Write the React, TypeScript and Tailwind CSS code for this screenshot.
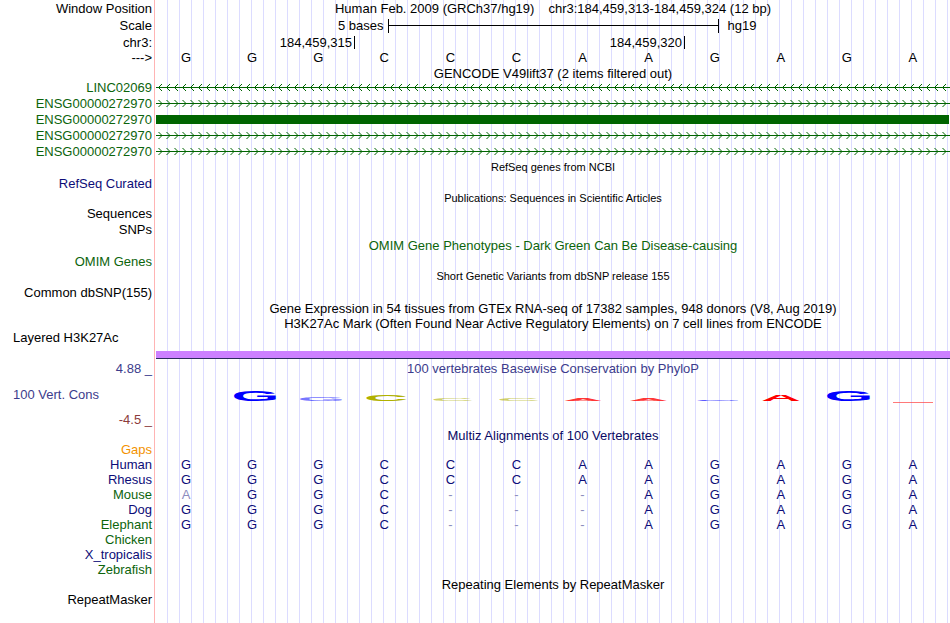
import type { ReactNode } from "react";

const GRID =
  "bg-[image:repeating-linear-gradient(to_right,transparent_0px,transparent_11px,#dcdcff_11px,#dcdcff_12px)]";

const NAVY = "text-[#0c0c78]";
const GREEN = "text-[#0c640c]";

interface RowProps {
  h: string;
  label?: ReactNode;
  labelClass?: string;
  dataClass?: string;
  plain?: boolean;
  children?: ReactNode;
}

const Row = ({
  h,
  label,
  labelClass = "justify-end pr-[2px] text-black",
  dataClass = "flex items-center justify-center",
  plain = false,
  children,
}: RowProps) => (
  <div className={`flex shrink-0 ${h}`}>
    <div
      className={`flex w-[154px] shrink-0 items-center whitespace-nowrap leading-[13px] ${labelClass}`}
    >
      {label}
    </div>
    <div className="w-px shrink-0 bg-[#ffb4b4]" />
    <div className="w-px shrink-0" />
    <div
      className={`min-w-0 flex-1 whitespace-nowrap leading-[13px] ${plain ? "" : GRID} ${dataClass}`}
    >
      {children}
    </div>
  </div>
);

// gene strand with chevrons every 8px
const Strand = ({ id, rev }: { id: string; rev?: boolean }) => (
  <svg width="794" height="15" className="block">
    <defs>
      <pattern
        id={id}
        x={1}
        y={0}
        width={8}
        height={15}
        patternUnits="userSpaceOnUse"
      >
        <polyline
          points={rev ? "5,4 1.5,7.5 5,11" : "1.5,4 5,7.5 1.5,11"}
          fill="none"
          stroke="#006400"
          strokeWidth={1}
        />
      </pattern>
    </defs>
    <line x1={0} x2={794} y1={7.5} y2={7.5} stroke="#006400" />
    <rect x={0} y={0} width={794} height={15} fill={`url(#${id})`} />
  </svg>
);

const REF = "GGGCCCAAGAGA".split("");
const GAPPED = ["G", "G", "G", "C", "-", "-", "-", "A", "G", "A", "G", "A"];

const BaseRow = ({
  bases,
  tone = "text-[#0c0c78]",
  lightFirst = false,
}: {
  bases: string[];
  tone?: string;
  lightFirst?: boolean;
}) => (
  <div className="-ml-[3px] grid h-full w-[793px] grid-cols-12 items-center text-center leading-[13px]">
    {bases.map((b, i) => (
      <span
        key={i}
        className={
          b === "-" || (lightFirst && i === 0) ? "text-[#8c8cbe]" : tone
        }
      >
        {b}
      </span>
    ))}
  </div>
);

const LOGO = [
  { cx: 255.5, w: 48, h: 10, ch: "G", fill: "#0000ff", op: 1 },
  { cx: 321.5, w: 48, h: 4, ch: "G", fill: "#0000ff", op: 0.55 },
  { cx: 386, w: 44, h: 6.3, ch: "C", fill: "#b0b000", op: 1 },
  { cx: 452.5, w: 43, h: 2, ch: "C", fill: "#b0b000", op: 0.6 },
  { cx: 518.5, w: 43, h: 2, ch: "C", fill: "#b0b000", op: 0.6 },
  { cx: 583, w: 40, h: 2.2, ch: "A", fill: "#ff0000", op: 0.8 },
  { cx: 648.5, w: 40, h: 2.2, ch: "A", fill: "#ff0000", op: 0.8 },
  { cx: 718, w: 47, h: 1.3, ch: "G", fill: "#0000ff", op: 0.8 },
  { cx: 781, w: 40, h: 7, ch: "A", fill: "#ff0000", op: 1 },
  { cx: 849, w: 49, h: 11, ch: "G", fill: "#0000ff", op: 1 },
];

const SeqLogo = () => (
  <svg width="794" height="32" className="block">
    {LOGO.map((l, i) => (
      <text
        key={i}
        transform={`translate(${l.cx - 156} 23) scale(1 ${l.h / 10.2})`}
        textAnchor="middle"
        fontSize={14}
        fontWeight="bold"
        fontFamily="'Liberation Sans', Arial, sans-serif"
        textLength={l.w}
        lengthAdjust="spacingAndGlyphs"
        fill={l.fill}
        fillOpacity={l.op}
      >
        {l.ch}
      </text>
    ))}
    <rect x={737} y={24} width={40} height={1} fill="#ff4040" opacity={0.7} />
  </svg>
);

const SPECIES: { name: string; tone: string; bases?: string[]; light?: boolean }[] = [
  { name: "Human", tone: NAVY, bases: REF },
  { name: "Rhesus", tone: NAVY, bases: REF },
  { name: "Mouse", tone: GREEN, bases: ["A", ...GAPPED.slice(1)], light: true },
  { name: "Dog", tone: NAVY, bases: GAPPED },
  { name: "Elephant", tone: GREEN, bases: GAPPED },
  { name: "Chicken", tone: GREEN },
  { name: "X_tropicalis", tone: NAVY },
  { name: "Zebrafish", tone: GREEN },
];

const App = () => {
  return (
    <div className="flex h-[623px] w-[950px] flex-col overflow-hidden bg-white font-['Liberation_Sans',Arial,sans-serif] text-[13px] text-black">
      <Row h="h-[17px]" label="Window Position">
        <div className="flex gap-[14px]">
          <span>Human Feb. 2009 (GRCh37/hg19)</span>
          <span>chr3:184,459,313-184,459,324 (12 bp)</span>
        </div>
      </Row>
      <Row h="h-[17px]" label="Scale" dataClass="flex items-center pl-[182px]">
        <span>5 bases</span>
        <div className="ml-[4px] flex h-[14px] w-[331px] items-center border-x border-black">
          <div className="h-px w-full bg-black" />
        </div>
        <span className="ml-[9px]">hg19</span>
      </Row>
      <Row h="h-[16px]" label="chr3:" dataClass="flex items-center">
        <span className="w-[196px] text-right">184,459,315</span>
        <div className="ml-[2px] h-[13px] w-px bg-black" />
        <span className="w-[327px] text-right">184,459,320</span>
        <div className="ml-[2px] h-[13px] w-px bg-black" />
      </Row>
      <Row h="h-[15px]" label="--->" dataClass="">
        <BaseRow bases={REF} tone="text-black" />
      </Row>
      <Row h="h-[15px]" dataClass="flex items-end justify-center">
        GENCODE V49lift37 (2 items filtered out)
      </Row>

      <Row h="h-[15px]" label="LINC02069" labelClass={`justify-end pr-[2px] ${GREEN}`} dataClass="flex items-center">
        <Strand id="s-rev" rev />
      </Row>
      <Row h="h-[16px]" label="ENSG00000272970" labelClass={`justify-end pr-[2px] ${GREEN}`} dataClass="flex items-center">
        <Strand id="s-fwd1" />
      </Row>
      <Row h="h-[16px]" label="ENSG00000272970" labelClass={`justify-end pr-[2px] ${GREEN}`} dataClass="flex items-center">
        <div className="h-[9px] w-[793px] bg-[#006400]" />
      </Row>
      <Row h="h-[16px]" label="ENSG00000272970" labelClass={`justify-end pr-[2px] ${GREEN}`} dataClass="flex items-center">
        <Strand id="s-fwd2" />
      </Row>
      <Row h="h-[16px]" label="ENSG00000272970" labelClass={`justify-end pr-[2px] ${GREEN}`} dataClass="flex items-center">
        <Strand id="s-fwd3" />
      </Row>

      <Row h="h-[16px]">
        <span className="text-[11px]">RefSeq genes from NCBI</span>
      </Row>
      <Row h="h-[16px]" label="RefSeq Curated" labelClass={`justify-end pr-[2px] ${NAVY}`} />
      <Row h="h-[15px]">
        <span className="text-[11px]">
          Publications: Sequences in Scientific Articles
        </span>
      </Row>
      <Row h="h-[15px]" label="Sequences" />
      <Row h="h-[16px]" label="SNPs" />
      <Row h="h-[16px]" dataClass={`flex items-center justify-center ${GREEN}`}>
        OMIM Gene Phenotypes - Dark Green Can Be Disease-causing
      </Row>
      <Row h="h-[16px]" label="OMIM Genes" labelClass={`justify-end pr-[2px] ${GREEN}`} />
      <Row h="h-[15px]">
        <span className="text-[11px]">
          Short Genetic Variants from dbSNP release 155
        </span>
      </Row>
      <Row h="h-[16px]" label="Common dbSNP(155)" />
      <Row h="h-[16px]">
        Gene Expression in 54 tissues from GTEx RNA-seq of 17382 samples, 948
        donors (V8, Aug 2019)
      </Row>
      <Row h="h-[14px]">
        H3K27Ac Mark (Often Found Near Active Regulatory Elements) on 7 cell
        lines from ENCODE
      </Row>
      <Row h="h-[15px]" label="Layered H3K27Ac" labelClass="justify-start pl-[13px] text-black" />
      <Row h="h-[6px]" />
      <Row h="h-[7px]" plain dataClass="bg-[#cd80ff]" />
      <Row h="h-px" plain dataClass="bg-[#2c2c5c]" />

      <Row
        h="h-[19px]"
        label="4.88 _"
        labelClass="justify-end pr-[2px] text-[#3c3c8c]"
        dataClass="flex items-center justify-center text-[#3c3c8c]"
      >
        100 vertebrates Basewise Conservation by PhyloP
      </Row>
      <Row
        h="h-[32px]"
        label="100 Vert. Cons"
        labelClass="justify-start pl-[13px] text-[#3c3c8c]"
        dataClass=""
      >
        <SeqLogo />
      </Row>
      <Row h="h-[18px]" label="-4.5 _" labelClass="justify-end pr-[2px] text-[#8c3c3c]" />
      <Row h="h-[14px]" dataClass="flex items-center justify-center text-[#0a0a64]">
        Multiz Alignments of 100 Vertebrates
      </Row>
      <Row h="h-[15px]" label="Gaps" labelClass="justify-end pr-[2px] text-[#f39200]" />
      {SPECIES.map((s) => (
        <Row
          key={s.name}
          h="h-[15px]"
          label={s.name}
          labelClass={`justify-end pr-[2px] ${s.tone}`}
          dataClass=""
        >
          {s.bases && <BaseRow bases={s.bases} lightFirst={s.light} />}
        </Row>
      ))}
      <Row h="h-[15px]">Repeating Elements by RepeatMasker</Row>
      <Row h="h-[15px]" label="RepeatMasker" />
      <Row h="flex-1" />
    </div>
  );
};

export default App;
